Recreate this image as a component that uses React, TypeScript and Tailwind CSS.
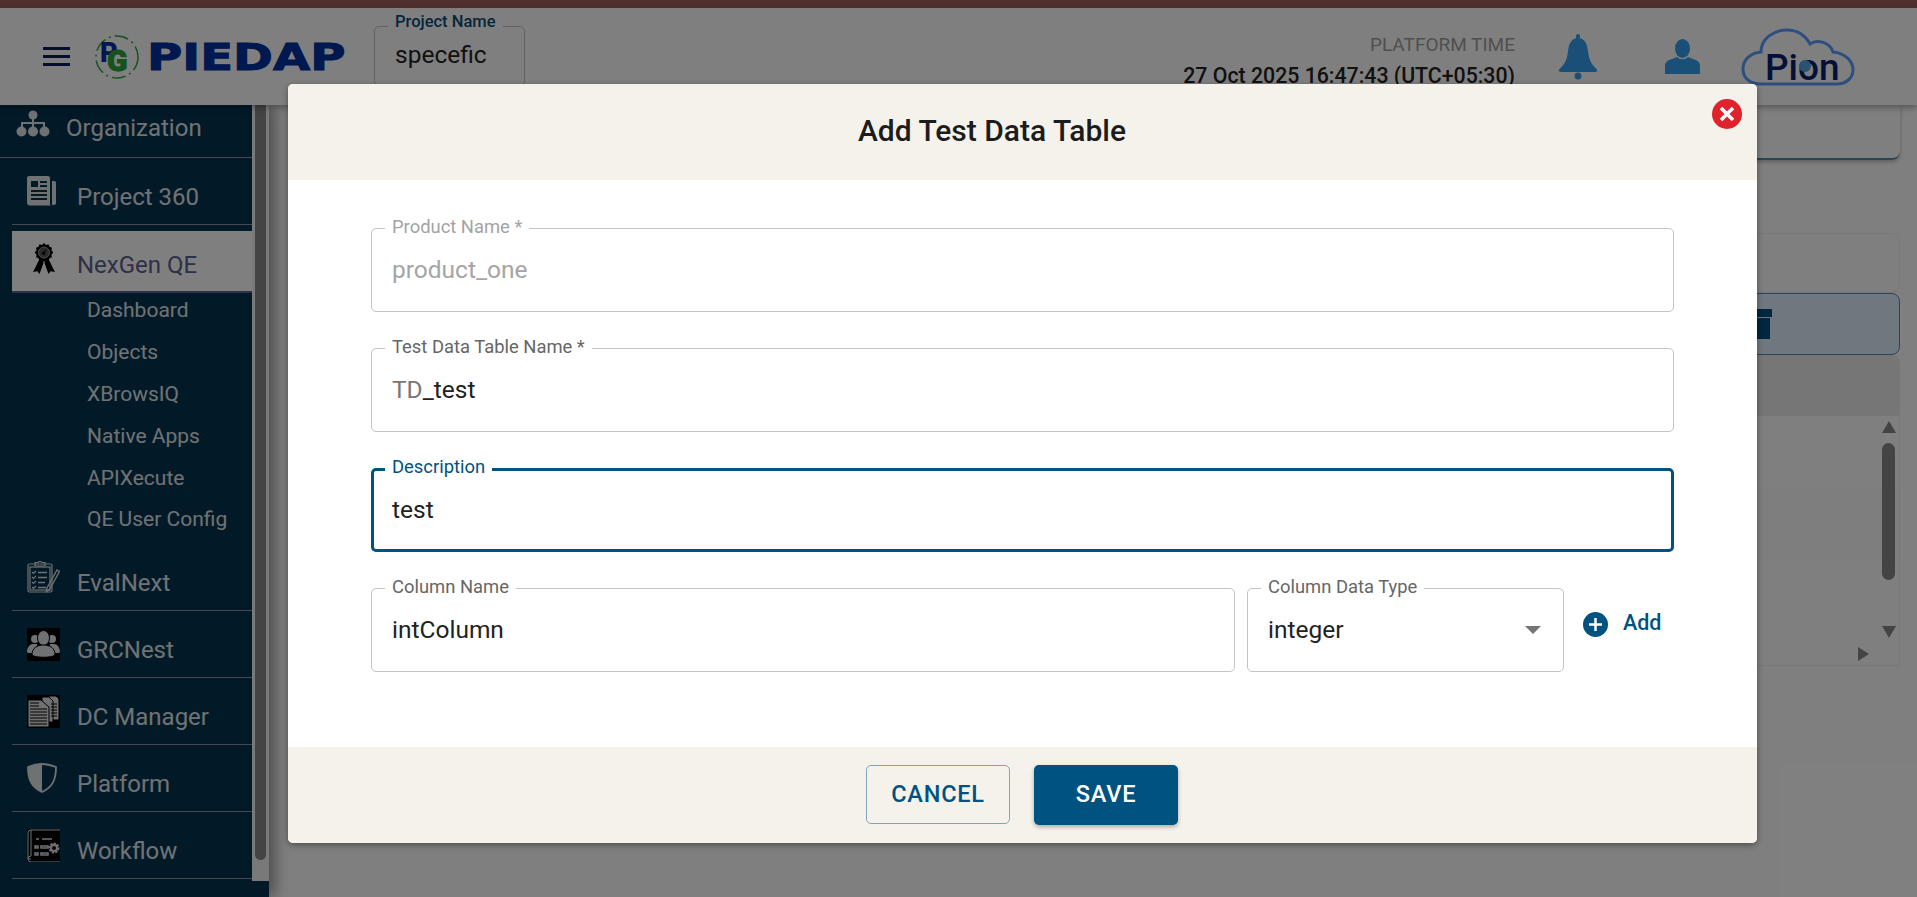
import React from 'react';

const font = { fontFamily: 'Roboto, sans-serif' };

const IconOrg = () => (
  <svg width="34" height="27" viewBox="0 0 34 27" fill="#e0e2e4">
    <circle cx="17" cy="5" r="4.5" />
    <rect x="16" y="8" width="2" height="6" />
    <rect x="5" y="12" width="24" height="2" />
    <rect x="5" y="12" width="2" height="6" />
    <rect x="16" y="12" width="2" height="6" />
    <rect x="27" y="12" width="2" height="6" />
    <circle cx="5.5" cy="21.5" r="5" />
    <circle cx="17" cy="21.5" r="5" />
    <circle cx="28.5" cy="21.5" r="5" />
  </svg>
);

const IconProject = () => (
  <svg width="30" height="30" viewBox="0 0 30 30">
    <path d="M2 0h19a2 2 0 0 1 2 2v25a2 2 0 0 0 1 2.5H3a3 3 0 0 1-3-3V2a2 2 0 0 1 2-2z" fill="#e0e2e4" />
    <path d="M25 5h2a2 2 0 0 1 2 2v20a2 2 0 0 1-2 2h-1a1 1 0 0 1-1-1z" fill="#e0e2e4" />
    <path d="M4 5h7v6H4zM13 5h7v2h-7zM13 9h7v2h-7zM4 14h16v2H4zM4 18h16v2H4zM4 22h16v2H4z" fill="#04344f" />
  </svg>
);

const IconAward = () => (
  <svg width="22" height="31" viewBox="0 0 22 31" fill="#000">
    <path d="M6.500 16L0 29l4.500-.8L6.500 31l4-11-1-4zM15.500 16L22 29l-4.500-.8L15.500 31l-4-11 1-4z" />
    <path d="M11 0l2 2 2.500-.8 1 2.500 2.500 1-.6 2.600 2 2.200-2 2.200.6 2.600-2.500 1-1 2.500-2.500-.8-2 2-2-2-2.500.8-1-2.500-2.500-1 .6-2.600-2-2.200 2-2.200-.6-2.600 2.500-1 1-2.500 2.500.8z" />
    <circle cx="11" cy="9.500" r="5.500" fill="#555555" stroke="#999999" strokeWidth="1" />
    <path d="M8.500 10.500l4.500-4-1.500 6z" />
  </svg>
);

const IconEval = () => (
  <svg width="33" height="32" viewBox="0 0 33 32" fill="none" stroke="#e0e2e4" strokeWidth="1.2">
    <rect x="1" y="3" width="24" height="28" rx="1.5" />
    <rect x="3" y="6" width="20" height="23" />
    <path d="M8 3V1.5h3L13 0l2 1.5h3V3v2H8z" />
    <path d="M5 11l1.5 1.5L9 10M5 16l1.5 1.5L9 15M5 21l1.5 1.5L9 20M5 26l1.5 1.5L9 25" />
    <path d="M11 11.500h9M11 16.500h9M11 21.500h7M11 26.500h8" strokeWidth="1.600" />
    <path d="M20 27l10-18 2.500 1.500-10 18-3 2z" strokeWidth="1.400" />
  </svg>
);

const IconPeople = () => (
  <svg width="33" height="33" viewBox="0 0 33 33">
    <rect width="33" height="33" fill="#000" />
    <g fill="#e0e2e4">
      <circle cx="8" cy="11" r="4" />
      <circle cx="25" cy="11" r="4" />
      <path d="M0 24c0-5 3-8 6-8h4v9H1zM33 24c0-5-3-8-6-8h-4v9h9z" />
      <ellipse cx="16.500" cy="10" rx="6" ry="7.500" stroke="#000" strokeWidth="1" />
      <path d="M5 27c0-7 5-10 11.500-10S28 20 28 27c-3 3-20 3-23 0z" stroke="#000" strokeWidth="1" />
    </g>
  </svg>
);

const IconDocs = () => (
  <svg width="33" height="33" viewBox="0 0 33 33">
    <rect width="33" height="33" fill="#000" />
    <path d="M22 1h7l3 3v21h-10z" fill="#e0e2e4" stroke="#000" />
    <path d="M15 2h7l4 4v21H15z" fill="#e0e2e4" stroke="#000" />
    <path d="M1 5h13l8 7v20H1z" fill="#e0e2e4" stroke="#000" />
    <path d="M3 14h17M3 17h17M3 20h17M3 23h17M3 26h17M3 29h17M3 11h9M3 8h9" stroke="#000" strokeWidth="1.200" />
    <path d="M24 9h6M24 12h6M24 15h6M24 18h6M24 21h6" stroke="#000" />
  </svg>
);

const IconShield = () => (
  <svg width="30" height="30" viewBox="0 0 30 30">
    <path d="M15 1C10 1 5 2.500 1 4c0 12 3 20 14 25 11-5 14-13 14-25-4-1.500-9-3-14-3z" fill="none" stroke="#e0e2e4" strokeWidth="1.800" />
    <path d="M15 1C10 1 5 2.500 1 4c0 12 3 20 14 25z" fill="#e0e2e4" />
  </svg>
);

const IconFlow = () => (
  <svg width="33" height="33" viewBox="0 0 33 33">
    <rect width="33" height="33" fill="#000" />
    <path d="M1 4a3 3 0 0 1 3-3h29M1 4v26h3M4 1v26a3 3 0 0 0-3 3 3 3 0 0 0 3 3h29" fill="none" stroke="#e0e2e4" strokeWidth="1" />
    <path d="M9 10h3M15 10h10M8 17h3v2H8zM14 17h7v2h-7zM8 24h3v2H8zM14 24h7v2h-7z" stroke="#e0e2e4" strokeWidth="1.500" />
    <circle cx="27" cy="19" r="4" fill="none" stroke="#e0e2e4" strokeWidth="3" strokeDasharray="2 1" />
    <circle cx="27" cy="19" r="3" fill="none" stroke="#e0e2e4" strokeWidth="2" />
  </svg>
);

const IconBell = () => (
  <svg width="40" height="46" viewBox="0 0 40 46" fill="#34a0f0">
    <rect x="18" y="0" width="4" height="6" rx="2" />
    <path d="M20 4c-6 0-9 5-10 13-.8 8-3 13-8.500 18-1.500 1.500-.5 2.500 1 3h35c1.500-.5 2.500-1.500 1-3-5.500-5-7.700-10-8.500-18-1-8-4-13-10-13z" />
    <circle cx="20" cy="42" r="3.500" />
  </svg>
);

const IconUser = () => (
  <svg width="35" height="35" viewBox="0 0 35 35" fill="#34a0f0">
    <ellipse cx="17.500" cy="9.500" rx="7.500" ry="9.500" />
    <path d="M0 35v-8c0-4 3-6 7-7l5-2c3 3 8 3 11 0l5 2c4 1 7 3 7 7v8z" />
  </svg>
);

const IconPion = () => (
  <svg width="114" height="58" viewBox="0 0 114 58" fill="none" stroke="#5a9eff" strokeWidth="3">
    <path d="M20 56C9 56 2 50 2 41 2 31 10 25 20 24 20 11 32 2 46 2c10 0 18 5 23 14 7-5 20-2 23 8 11 1 20 8 20 18 0 8-7 14-16 14z" />
  </svg>
);

const NavRow = ({ icon, label }: { icon: React.ReactNode; label: string }) => (
  <div className="ml-[12px] flex h-[67px] items-center border-b border-[#8b90a8]">
    <div className="flex w-[65px] shrink-0 justify-start pl-[15px]">{icon}</div>
    <span className="pt-[11px] text-[24px] text-[#e0e4e8]">{label}</span>
  </div>
);

const Field = ({
  label,
  children,
  disabled,
  focused,
  className,
}: {
  label: string;
  children: React.ReactNode;
  disabled?: boolean;
  focused?: boolean;
  className?: string;
}) => (
  <div
    className={`relative flex h-[84px] items-center rounded-[5px] text-[24.500px] ${
      focused ? 'border-[3px] border-[#005280] px-[18px]' : 'border border-[#c4c4c4] px-[20px]'
    } ${className ?? ''}`}
  >
    <span
      className={`absolute bg-white px-[7px] text-[18.400px] leading-[20px] ${
        focused ? 'top-[-14px] left-[11px] text-[#005280]' : disabled ? 'top-[-12px] left-[13px] text-[#a3a3a3]' : 'top-[-12px] left-[13px] text-[#666666]'
      }`}
    >
      {label}
    </span>
    {children}
  </div>
);

export default function App() {
  return (
    <div className="relative h-[897px] w-full overflow-hidden bg-white" style={font}>
      <div className="h-[8px] bg-[#a0605e]" />

      {/* top bar */}
      <header className="relative z-10 flex h-[97px] items-center bg-[#ffffff] pl-[43px] pr-[62px] shadow-[0_3px_6px_rgba(0,0,0,0.3)]">
        <div className="flex w-[27px] flex-col gap-[5px]">
          <div className="h-[3px] bg-[#0c1a60]" />
          <div className="h-[3px] bg-[#0c1a60]" />
          <div className="h-[3px] bg-[#0c1a60]" />
        </div>
        <div className="relative ml-[24px] h-[44px] w-[46px]">
          <svg width="46" height="44" viewBox="0 0 46 44" fill="none">
            <circle cx="23" cy="22" r="21" stroke="#2ea33a" strokeWidth="1.500" strokeDasharray="14 4 2 4" />
          </svg>
          <span className="absolute left-[6px] top-[2px] text-[27px] font-black leading-[32px] text-[#0030a0]">P</span>
          <span
            className="absolute left-[13px] top-[9px] text-[30px] font-black leading-[34px] text-[#2ea33a]"
            style={{ WebkitTextStroke: '1px #2ea33a' }}
          >
            G
          </span>
        </div>
        <span
          className="ml-[7px] mt-[1px] w-[196px] origin-left scale-x-[1.3] text-[37px] font-bold leading-none text-[#0030a0] [-webkit-text-stroke:1px_#0030a0]"
          style={{ fontFamily: '"DejaVu Sans", sans-serif' }}
        >
          PIEDAP
        </span>
        <div className="relative ml-[31px] -mt-[2px] flex h-[60px] w-[151px] items-center rounded-[5px] border border-[#c4c4c4] px-[20px] text-[24.500px] text-[#222222]">
          <span className="absolute top-[-15px] left-[13px] bg-white px-[7px] text-[16.500px] font-medium leading-[20px] text-[#0c4c78]">
            Project Name
          </span>
          specefic
        </div>
        <div className="ml-auto flex flex-col items-end">
          <span className="mt-[8px] text-[19px] leading-[22px] text-[#a0a0a0]">PLATFORM TIME</span>
          <span className="mt-[8px] text-[21.300px] font-medium leading-[24px] text-[#222222]">
            27 Oct 2025 16:47:43 (UTC+05:30)
          </span>
        </div>
        <div className="ml-[43px]">
          <IconBell />
        </div>
        <div className="ml-[67px]">
          <IconUser />
        </div>
        <div className="relative ml-[41px] h-[58px] w-[114px]">
          <IconPion />
          <span className="absolute left-[24px] top-[20px] text-[37px] font-medium leading-[40px] text-[#0a2070]">
            Pion
          </span>
          <div className="absolute left-[58px] top-[32px] h-[12px] w-[12px] rounded-full bg-[#54a4e8]" />
        </div>
      </header>

      <div className="flex h-[792px]">
        {/* sidebar */}
        <aside className="flex w-[269px] shrink-0 overflow-hidden bg-[#043450] shadow-[6px_0_14px_rgba(0,0,0,0.4)]">
          <nav className="w-[252px] shrink-0">
            <div className="flex h-[53px] items-center border-b border-[#8b90a8]">
              <div className="w-[66px] shrink-0 pb-[15px] pl-[16px]">
                <IconOrg />
              </div>
              <span className="pb-[6px] text-[24px] text-[#e0e4e8]">Organization</span>
            </div>
            <NavRow icon={<IconProject />} label="Project 360" />
            <div className="ml-[12px] mt-[6px] flex h-[62px] items-center border-b-2 border-[#5c60a0] bg-white">
              <div className="w-[65px] shrink-0 pb-[6px] pl-[21px]">
                <IconAward />
              </div>
              <span className="pt-[7px] text-[24px] text-[#5c6090]">NexGen QE</span>
            </div>
            <ul className="-mt-[3px] flex h-[254px] flex-col pl-[87px] text-[21px] text-[#e0e4e8]">
              {['Dashboard', 'Objects', 'XBrowsIQ', 'Native Apps', 'APIXecute', 'QE User Config'].map(name => (
                <li key={name} className="flex h-[42px] items-center last:-mt-[1px]">
                  {name}
                </li>
              ))}
            </ul>
            <NavRow icon={<IconEval />} label="EvalNext" />
            <NavRow icon={<IconPeople />} label="GRCNest" />
            <NavRow icon={<IconDocs />} label="DC Manager" />
            <NavRow icon={<IconShield />} label="Platform" />
            <NavRow icon={<IconFlow />} label="Workflow" />
          </nav>
          <div className="h-[776px] w-[17px] shrink-0 bg-[#f2f2f2] px-[3px]">
            <div className="h-[755px] rounded-b-[6px] bg-[#888888]" />
          </div>
        </aside>

        {/* page behind the dialog */}
        <main className="flex min-w-0 flex-1 flex-col pl-[40px] pr-[17px]">
          <div className="h-[55px] rounded-b-[8px] border-b-2 border-[#5a8aa8] shadow-[0_2px_4px_rgba(0,0,0,0.25)]" />
          <div className="mt-[73px] h-[60px] rounded-[8px] border border-[#f0f0f0]" />
          <div className="flex h-[62px] items-center justify-end rounded-[8px] border border-[#5c8ab0] bg-[#e0f0ff] pr-[127px]">
            <svg width="20" height="30" viewBox="0 0 20 30" fill="#04507e">
              <path d="M0 0h20v8H0zM2 9h16v21H2z" />
            </svg>
          </div>
          <div className="h-[60px] rounded-t-[8px] bg-[#ececec]" />
          <div className="relative flex h-[251px] flex-col border border-[#f0f0f0]">
            <div className="mt-[72px] h-[72px] bg-[#fdfdfd]" />
            <div className="absolute right-[2px] top-0 flex h-[222px] w-[17px] flex-col items-center pt-[5px]">
              <div className="h-0 w-0 border-x-[7px] border-b-[12px] border-x-transparent border-b-[#888888]" />
              <div className="mt-[10px] h-[137px] w-[13px] rounded-full bg-[#888888]" />
              <div className="mt-auto h-0 w-0 border-x-[7px] border-t-[12px] border-x-transparent border-t-[#888888]" />
            </div>
            <div className="absolute bottom-[4px] right-[30px] h-0 w-0 border-y-[7px] border-l-[11px] border-y-transparent border-l-[#888888]" />
          </div>
        </main>
      </div>

      <div className="absolute inset-0 z-20 bg-black/50" />

      {/* dialog */}
      <div className="absolute left-[288px] top-[84px] z-30 flex h-[759px] w-[1469px] flex-col overflow-hidden rounded-[5px] bg-white shadow-[0_2px_6px_rgba(0,0,0,0.4)]">
        <div className="relative flex h-[96px] shrink-0 items-center justify-center bg-[#f5f2eb] pb-[4px] pr-[61px]">
          <h2 className="text-[30px] font-medium text-[#1c1c1c]">Add Test Data Table</h2>
          <button className="absolute right-[15px] top-[15px] flex h-[30px] w-[30px] items-center justify-center rounded-full bg-[#e0222c]">
            <svg width="18" height="18" viewBox="0 0 18 18" stroke="#ffffff" strokeWidth="3.500">
              <path d="M3 3l12 12M15 3L3 15" />
            </svg>
          </button>
        </div>

        <div className="flex flex-1 flex-col gap-[36px] px-[83px] pt-[48px]">
          <Field label="Product Name *" disabled>
            <span className="text-[#a5a5a5]">product_one</span>
          </Field>
          <Field label="Test Data Table Name *">
            <span className="text-[#777777]">TD</span>
            <span className="text-[#222222]">_test</span>
          </Field>
          <Field label="Description" focused>
            <span className="text-[#222222]">test</span>
          </Field>
          <div className="flex items-start">
            <Field label="Column Name" className="w-[864px]">
              <span className="text-[#222222]">intColumn</span>
            </Field>
            <Field label="Column Data Type" className="ml-[12px] w-[317px]">
              <span className="text-[#222222]">integer</span>
              <div className="ml-auto mr-[2px] h-0 w-0 border-x-[8px] border-t-[8px] border-x-transparent border-t-[#757575]" />
            </Field>
            <div className="ml-[19px] mt-[21px] flex items-center">
              <svg width="25" height="25" viewBox="0 0 25 25">
                <circle cx="12.500" cy="12.500" r="12.500" fill="#005280" />
                <path d="M12.500 6v13M6 12.500h13" stroke="#ffffff" strokeWidth="2.500" />
              </svg>
              <span className="ml-[15px] -mt-[2px] text-[21.500px] font-medium text-[#005280]">Add</span>
            </div>
          </div>
        </div>

        <div className="flex h-[96px] shrink-0 items-start justify-center gap-[24px] bg-[#f5f2eb] pr-[1px] pt-[18px]">
          <button className="h-[59px] w-[144px] rounded-[5px] border border-[#7ba7bd] text-[23.500px] font-medium tracking-[0.8px] text-[#005280]">
            CANCEL
          </button>
          <button className="h-[60px] w-[144px] rounded-[5px] bg-[#005280] text-[23.500px] font-medium tracking-[0.8px] text-white shadow-[0_2px_4px_rgba(0,0,0,0.3)]">
            SAVE
          </button>
        </div>
      </div>
    </div>
  );
}
